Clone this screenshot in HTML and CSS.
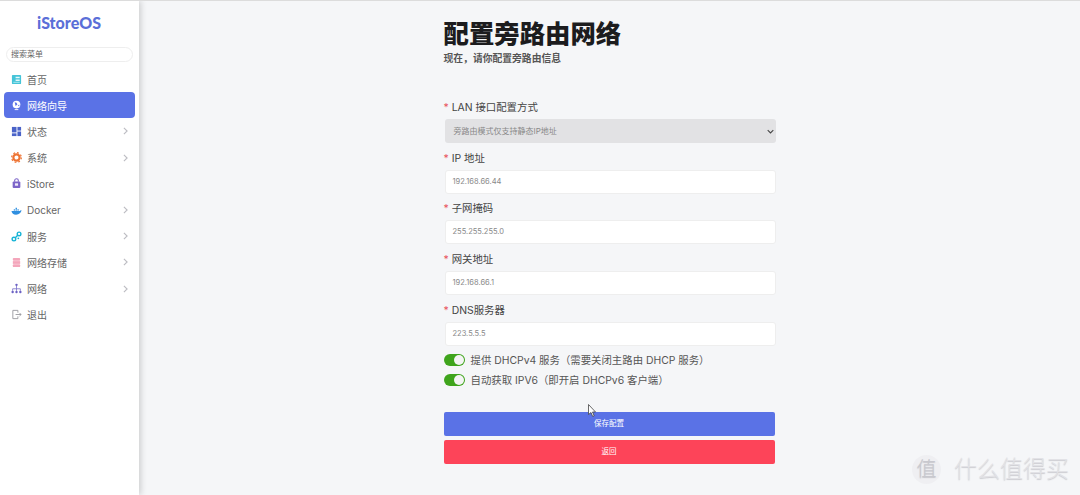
FILE: index.html
```html
<!DOCTYPE html>
<html lang="zh-CN">
<head>
<meta charset="utf-8">
<title>iStoreOS</title>
<link rel="stylesheet" href="styles.css">
</head>
<body>
<div class="app">
  <aside class="sidebar">
    <div class="logo">iStoreOS</div>
    <div class="search">搜索菜单</div>
    <nav class="nav">
      <a class="item"><svg class="ico" viewBox="0 0 12 12"><rect x="1" y="1" width="10" height="10" rx="1" fill="#45c4d8"/><rect x="5" y="3" width="4.5" height="1.6" fill="#e8f8fb"/><rect x="5" y="6" width="4.5" height="1.6" fill="#e8f8fb"/><rect x="2.5" y="8.5" width="7" height="1.2" fill="#9ee3ec"/></svg><span class="txt">首页</span></a>
      <a class="item active"><svg class="ico" viewBox="0 0 12 12"><circle cx="6" cy="5" r="4.2" fill="#fff"/><path d="M4 2.5l2 .5 1 2-2 1.5zM7.5 6l1.5-1v2z" fill="#5a72e6"/><rect x="4" y="10" width="4" height="1" fill="#fff"/></svg><span class="txt">网络向导</span></a>
      <a class="item"><svg class="ico" viewBox="0 0 12 12"><rect x="1" y="1" width="5" height="6" fill="#4a63c8"/><rect x="7" y="1" width="4" height="4" fill="#4a63c8"/><rect x="1" y="8" width="5" height="3" fill="#4a63c8"/><rect x="7" y="6" width="4" height="5" fill="#4a63c8"/></svg><span class="txt">状态</span><svg class="chev" viewBox="0 0 6 10"><path d="M1 1l4 4-4 4" fill="none" stroke="#bcbcc2" stroke-width="1.4"/></svg></a>
      <a class="item"><svg class="ico" viewBox="0 0 12 12"><circle cx="6" cy="6" r="3.4" fill="none" stroke="#ee7434" stroke-width="2.4"/><circle cx="6" cy="6" r="5.3" fill="none" stroke="#ee7434" stroke-width="1.3" stroke-dasharray="2 2.15"/></svg><span class="txt">系统</span><svg class="chev" viewBox="0 0 6 10"><path d="M1 1l4 4-4 4" fill="none" stroke="#bcbcc2" stroke-width="1.4"/></svg></a>
      <a class="item"><svg class="ico" viewBox="0 0 12 12"><path d="M4 4V2.8a2 2 0 0 1 4 0V4" fill="none" stroke="#7c64c8" stroke-width="1.2"/><rect x="1.8" y="3.8" width="8.4" height="7.2" rx="1.2" fill="#7c64c8"/><rect x="4.3" y="5.8" width="3.4" height="2.6" fill="#efeafa"/></svg><span class="txt">iStore</span></a>
      <a class="item"><svg class="ico" viewBox="0 0 12 12"><path d="M.5 6.5h9c.6-.7 1.2-.9 2-.7-.4 2.6-2.500 4.700-6 4.700-3 0-4.500-1.700-5-4z" fill="#2f8fe0"/><rect x="3" y="4.700" width="1.500" height="1.400" fill="#2f8fe0"/><rect x="5" y="4.700" width="1.500" height="1.400" fill="#2f8fe0"/><rect x="5" y="3" width="1.500" height="1.400" fill="#2f8fe0"/><rect x="7" y="4.700" width="1.500" height="1.400" fill="#2f8fe0"/></svg><span class="txt">Docker</span><svg class="chev" viewBox="0 0 6 10"><path d="M1 1l4 4-4 4" fill="none" stroke="#bcbcc2" stroke-width="1.4"/></svg></a>
      <a class="item"><svg class="ico" viewBox="0 0 12 12"><circle cx="3.200" cy="8.800" r="2" fill="none" stroke="#18b4d6" stroke-width="1.500"/><circle cx="8.800" cy="3.200" r="2" fill="none" stroke="#18b4d6" stroke-width="1.500"/><circle cx="8" cy="8" r="1" fill="#18b4d6"/><path d="M4.700 7.300l2.600-2.600" stroke="#18b4d6" stroke-width="1.500"/></svg><span class="txt">服务</span><svg class="chev" viewBox="0 0 6 10"><path d="M1 1l4 4-4 4" fill="none" stroke="#bcbcc2" stroke-width="1.4"/></svg></a>
      <a class="item"><svg class="ico" viewBox="0 0 12 12"><rect x="2" y="1" width="8" height="3" rx="1" fill="#f4a6bb"/><rect x="2" y="4.500" width="8" height="3" fill="#f4a6bb"/><rect x="2" y="8" width="8" height="3" rx="1" fill="#f4a6bb"/></svg><span class="txt">网络存储</span><svg class="chev" viewBox="0 0 6 10"><path d="M1 1l4 4-4 4" fill="none" stroke="#bcbcc2" stroke-width="1.4"/></svg></a>
      <a class="item"><svg class="ico" viewBox="0 0 12 12"><circle cx="6" cy="2" r="1.300" fill="#6c62c4"/><path d="M6 3v3M1.800 8.500V6.300h8.400v2.200M6 6v2.500" fill="none" stroke="#6c62c4" stroke-width=".8"/><circle cx="1.800" cy="9.800" r="1.300" fill="#6c62c4"/><circle cx="6" cy="9.800" r="1.300" fill="#6c62c4"/><circle cx="10.200" cy="9.800" r="1.300" fill="#6c62c4"/></svg><span class="txt">网络</span><svg class="chev" viewBox="0 0 6 10"><path d="M1 1l4 4-4 4" fill="none" stroke="#bcbcc2" stroke-width="1.4"/></svg></a>
      <a class="item"><svg class="ico" viewBox="0 0 12 12"><path d="M7.500 4V1.500H2v9h5.500V8" fill="none" stroke="#9a9aa0" stroke-width="1"/><path d="M5 6h6M9.300 4.300L11 6 9.300 7.700" fill="none" stroke="#9a9aa0" stroke-width="1"/></svg><span class="txt">退出</span></a>
    </nav>
  </aside>
  <main class="main">
    <form class="form">
      <h1 class="title">配置旁路由网络</h1>
      <p class="sub">现在，请你配置旁路由信息</p>
      <div class="fields">
        <div class="field"><label class="label"><span class="req">*</span> LAN 接口配置方式</label>
          <div class="select"><span>旁路由模式仅支持静态IP地址</span><svg class="caret" viewBox="0 0 10 6"><path d="M1 1l4 4 4-4" fill="none" stroke="#444" stroke-width="1.500"/></svg></div></div>
        <div class="field"><label class="label"><span class="req">*</span> IP 地址</label><div class="input">192.168.66.44</div></div>
        <div class="field"><label class="label"><span class="req">*</span> 子网掩码</label><div class="input">255.255.255.0</div></div>
        <div class="field"><label class="label"><span class="req">*</span> 网关地址</label><div class="input">192.168.66.1</div></div>
        <div class="field"><label class="label"><span class="req">*</span> DNS服务器</label><div class="input">223.5.5.5</div></div>
      </div>
      <div class="toggles">
        <div class="toggle-row"><span class="switch"><i class="knob"></i></span><span>提供 DHCPv4 服务（需要关闭主路由 DHCP 服务）</span></div>
        <div class="toggle-row"><span class="switch"><i class="knob"></i></span><span>自动获取 IPV6（即开启 DHCPv6 客户端）</span></div>
      </div>
      <div class="btn save">保存配置</div>
      <div class="btn back">返回</div>
    </form>
  </main>
</div>
<svg class="cursor" viewBox="0 0 9 13"><path d="M.5.5v10l2.500-2 1.700 4 1.500-.7-1.700-3.800h3z" fill="#fff" stroke="#444" stroke-width=".8"/></svg>
<div class="mark"><span class="mark-badge">值</span><span>什么值得买</span></div>
</body>
</html>
```
FILE: styles.css
```css
* { box-sizing: border-box; }
html, body { margin: 0; height: 100%; overflow: hidden; }
body {
  font-family: "Inter", "Noto Sans CJK SC", sans-serif;
  background: #f5f6f8;
  color: #555;
  border-top: 1px solid #dcdcdc;
}
.app { display: flex; height: 494px; }
.sidebar {
  width: 139px;
  flex: none;
  background: #fff;
  box-shadow: 2px 0 6px rgba(0, 0, 0, .16);
  padding: 13px 4px 0;
  z-index: 1;
}
.logo {
  font-family: "Lato", "Inter", sans-serif;
  font-size: 16px;
  font-weight: 900;
  line-height: 18px;
  color: #5b6fd8;
  text-align: center;
  margin-left: -1px;
}
.search {
  margin: 15px 2px 0 2px;
  height: 15px;
  border: 1px solid #eee;
  border-radius: 8px;
  font-size: 8px;
  line-height: 13px;
  padding-left: 4px;
  color: #666;
}
.nav { display: flex; flex-direction: column; margin-top: 4px; }
.item {
  display: flex;
  align-items: center;
  height: 26.2px;
  padding: 0 7px 0 7px;
  font-size: 10px;
  color: #666;
  border-radius: 4px;
}
.item.active { background: #5a72e6; color: #fff; }
.ico { width: 11px; height: 11px; flex: none; margin-right: 5px; }
.txt { flex: 1; }
.chev { width: 5px; height: 8px; flex: none; }
.main { flex: 1; display: flex; justify-content: center; }
.form { width: 332px; padding-top: 17px; }
.title {
  margin: 0;
  font-size: 25.4px;
  line-height: 32px;
  font-weight: 900;
  color: #1c1c1e;
}
.sub {
  margin: 2px 0 0;
  font-size: 9.8px;
  line-height: 14px;
  font-weight: 700;
  color: #555;
}
.fields { display: flex; flex-direction: column; gap: 7.7px; margin-top: 34px; }
.field { display: flex; flex-direction: column; }
.label { font-size: 10.4px; line-height: 15px; color: #444; margin-bottom: 4px; }
.req { color: #e8505b; }
.select, .input {
  height: 24px;
  font-size: 8px;
  line-height: 24px;
  padding: 0 9px;
  color: #888;
  border-radius: 3px;
  margin-left: 1px;
}
.input { background: #fff; border: 1px solid #eee; line-height: 22px; font-size: 7.5px; padding: 0 7px; }
.select {
  background: #e2e2e4;
  display: flex;
  align-items: center;
  justify-content: space-between;
  padding-right: 2px;
}
.caret { width: 7px; height: 5px; }
.toggles { display: flex; flex-direction: column; gap: 7px; margin-top: 8px; }
.toggle-row { display: flex; align-items: center; font-size: 10.4px; line-height: 13px; color: #555; gap: 6px; }
.switch {
  width: 21px;
  height: 12px;
  border-radius: 6px;
  background: #3fa41c;
  position: relative;
  flex: none;
}
.knob {
  position: absolute;
  right: 1px;
  top: 1px;
  width: 10px;
  height: 10px;
  border-radius: 50%;
  background: #f4f4f4;
}
.btn {
  height: 24px;
  line-height: 24px;
  text-align: center;
  font-size: 7.5px;
  color: #fff;
  border-radius: 2px;
  width: 331px;
}
.save { background: #5a72e6; margin-top: 25px; }
.back { background: #fd4459; margin-top: 4px; }
.cursor { position: absolute; left: 588px; top: 404px; width: 9px; height: 13px; }
.mark {
  position: absolute;
  left: 912px;
  top: 454px;
  display: flex;
  align-items: center;
  gap: 13px;
  font-size: 23px;
  font-weight: 300;
  line-height: 30px;
  color: #e2e2e6;
  text-shadow: 0 1px 1px rgba(120, 120, 130, .35);
}
.mark-badge {
  width: 29px;
  height: 29px;
  border-radius: 50%;
  background: #efeff2;
  color: #c8c8ce;
  font-size: 20px;
  line-height: 29px;
  text-align: center;
}
```
